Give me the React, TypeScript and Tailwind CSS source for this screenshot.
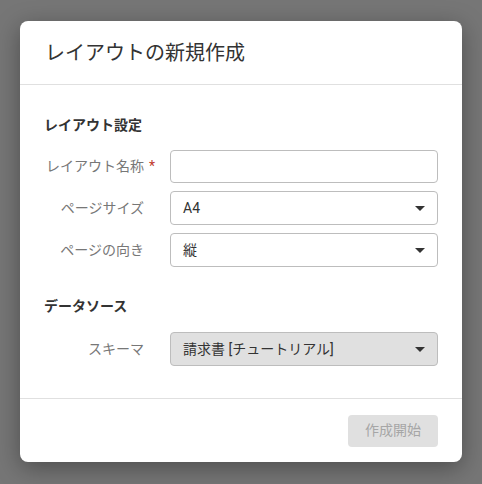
import React from "react";

const font = { fontFamily: 'Roboto, "Noto Sans CJK JP", sans-serif' };

function Caret() {
    return (
        <svg width="10" height="5" viewBox="0 0 10 5" className="shrink-0">
            <path d="M0 0 L10 0 L5 5 Z" fill="#333333"/>
        </svg>
    );
}

function Row({label, required, children}: { label: string; required?: boolean; children: React.ReactNode }) {
    return (
        <div className="flex items-center">
            <div className="w-[126px] shrink-0 pr-[26px] text-right text-[14px] text-[#777777]">
                <span className="relative">
                    {label}
                    {required && <span className="absolute left-full ml-[5px] text-[#c0392b]">*</span>}
                </span>
            </div>
            {children}
        </div>
    );
}

function Select({value, disabled}: { value: string; disabled?: boolean }) {
    return (
        <div
            className={`flex-1 h-[34px] flex items-center justify-between pl-3 pr-3 rounded border text-[14px] text-[#333333] ${
                disabled ? "bg-[#e0e0e0] border-[#bdbdbd]" : "bg-white border-[#bdbdbd]"
            }`}
        >
            <span>{value}</span>
            <Caret/>
        </div>
    );
}

export default function App() {
    return (
        <div className="w-[482px] h-[484px] bg-[#767676] flex items-start justify-center pt-[21px]" style={font}>
            <div className="w-[442px] bg-white rounded-lg shadow-[0_6px_24px_rgba(0,0,0,0.35)] flex flex-col">
                {/* Header */}
                <div className="h-[64px] px-6 flex items-center border-b border-[#e0e0e0]">
                    <h1 className="text-[20px] text-[#333333] pl-px">レイアウトの新規作成</h1>
                </div>

                {/* Body */}
                <div className="px-6 pt-[30px] pb-[32px]">
                    <h2 className="text-[14px] leading-5 font-bold text-[#333333]">レイアウト設定</h2>
                    <div className="mt-[15px] flex flex-col gap-2">
                        <Row label="レイアウト名称" required>
                            <input className="flex-1 h-[33px] rounded border border-[#bdbdbd] bg-white px-3 text-[14px] outline-none"/>
                        </Row>
                        <Row label="ページサイズ">
                            <Select value="A4"/>
                        </Row>
                        <Row label="ページの向き">
                            <Select value="縦"/>
                        </Row>
                    </div>

                    <h2 className="mt-[29px] text-[14px] leading-5 font-bold text-[#333333]">データソース</h2>
                    <div className="mt-[16px]">
                        <Row label="スキーマ">
                            <Select value="請求書 [チュートリアル]" disabled/>
                        </Row>
                    </div>
                </div>

                {/* Footer */}
                <div className="h-[64px] px-6 flex items-center justify-end border-t border-[#e0e0e0]">
                    <button
                        disabled
                        className="h-[32px] w-[90px] rounded bg-[#e0e0e0] text-[14px] text-[#a6a6a6]"
                    >
                        作成開始
                    </button>
                </div>
            </div>
        </div>
    );
}
